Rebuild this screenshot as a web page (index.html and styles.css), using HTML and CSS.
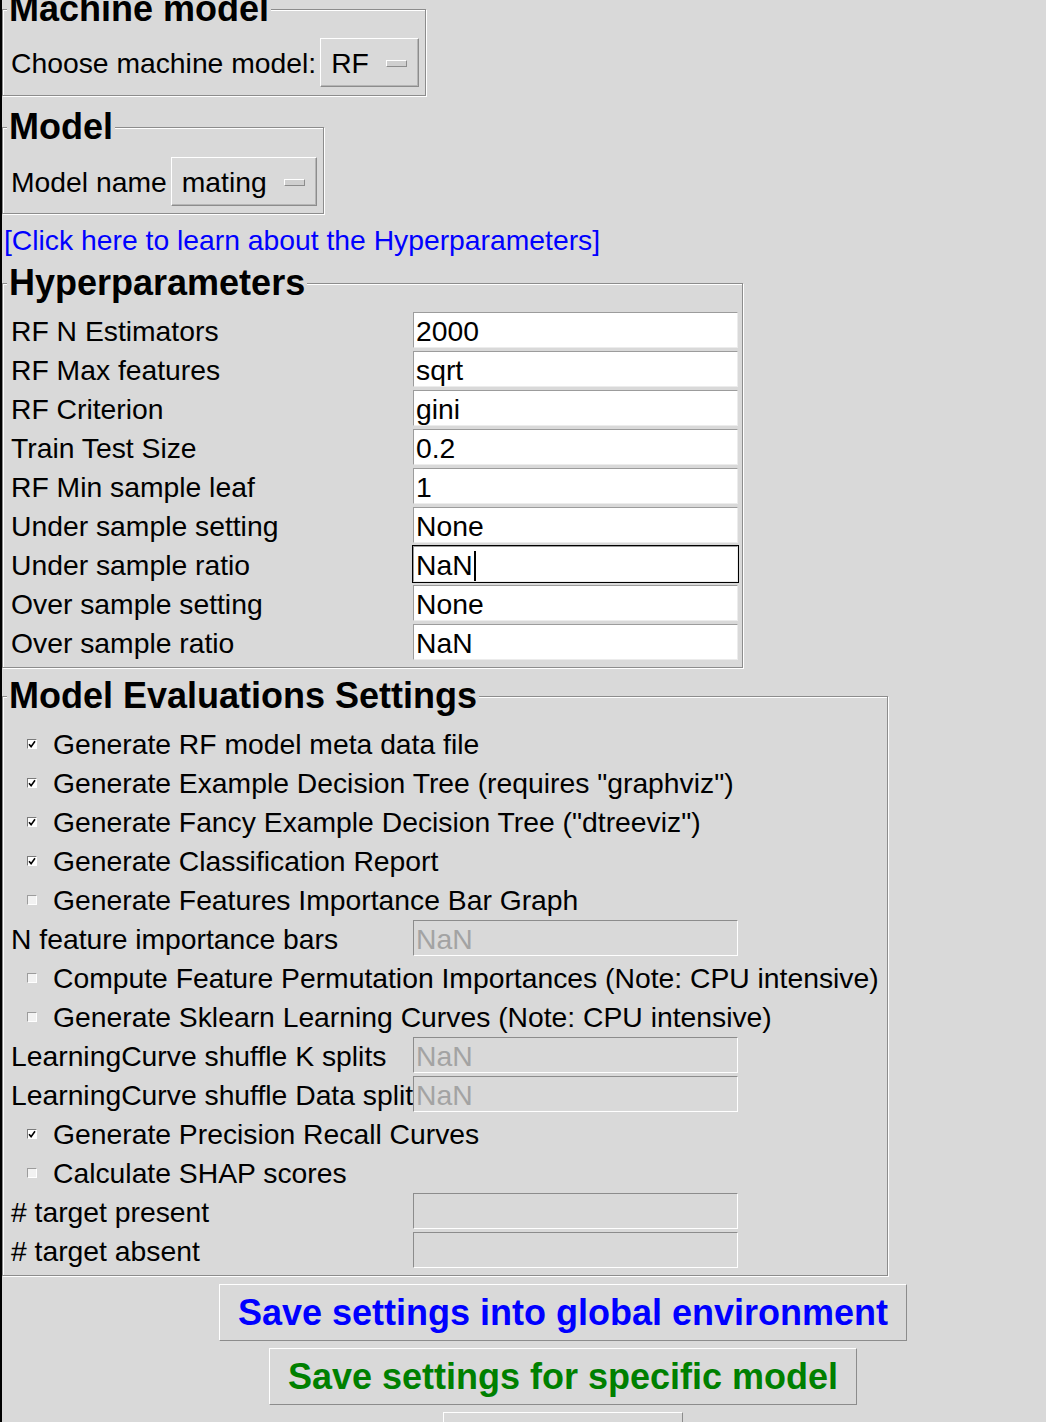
FILE: index.html
```html
<!DOCTYPE html>
<html lang="en">
<head>
<meta charset="utf-8">
<title>Machine model settings</title>
<link rel="stylesheet" href="styles.css">
</head>
<body>
  <fieldset class="group group-machine">
    <legend class="group-title">Machine model</legend>
    <div class="choice-row">
      <span class="choice-label">Choose machine model:</span>
      <div class="menubutton"><span class="menubutton-text">RF</span><span class="menubutton-indicator"></span></div>
    </div>
  </fieldset>

  <fieldset class="group group-model">
    <legend class="group-title">Model</legend>
    <div class="choice-row">
      <span class="choice-label">Model name</span>
      <div class="menubutton"><span class="menubutton-text">mating</span><span class="menubutton-indicator"></span></div>
    </div>
  </fieldset>

  <a class="help-link" href="#">[Click here to learn about the Hyperparameters]</a>

  <fieldset class="group group-hyper">
    <legend class="group-title">Hyperparameters</legend>
    <div class="field-grid">
      <span class="field-label">RF N Estimators</span><div class="entry">2000</div>
      <span class="field-label">RF Max features</span><div class="entry">sqrt</div>
      <span class="field-label">RF Criterion</span><div class="entry">gini</div>
      <span class="field-label">Train Test Size</span><div class="entry">0.2</div>
      <span class="field-label">RF Min sample leaf</span><div class="entry">1</div>
      <span class="field-label">Under sample setting</span><div class="entry">None</div>
      <span class="field-label">Under sample ratio</span><div class="entry entry-focused">NaN<span class="caret"></span></div>
      <span class="field-label">Over sample setting</span><div class="entry">None</div>
      <span class="field-label">Over sample ratio</span><div class="entry">NaN</div>
    </div>
  </fieldset>

  <fieldset class="group group-eval">
    <legend class="group-title">Model Evaluations Settings</legend>
    <div class="field-grid">
      <div class="check-row"><span class="checkbox checkbox-on"><svg viewBox="0 0 8 8" width="8" height="8"><path d="M1 4.2 L3.1 6.6 L7 1.2" fill="none" stroke="#000" stroke-width="1.6"/></svg></span><span>Generate RF model meta data file</span></div>
      <div class="check-row"><span class="checkbox checkbox-on"><svg viewBox="0 0 8 8" width="8" height="8"><path d="M1 4.2 L3.1 6.6 L7 1.2" fill="none" stroke="#000" stroke-width="1.6"/></svg></span><span>Generate Example Decision Tree (requires "graphviz")</span></div>
      <div class="check-row"><span class="checkbox checkbox-on"><svg viewBox="0 0 8 8" width="8" height="8"><path d="M1 4.2 L3.1 6.6 L7 1.2" fill="none" stroke="#000" stroke-width="1.6"/></svg></span><span>Generate Fancy Example Decision Tree ("dtreeviz")</span></div>
      <div class="check-row"><span class="checkbox checkbox-on"><svg viewBox="0 0 8 8" width="8" height="8"><path d="M1 4.2 L3.1 6.6 L7 1.2" fill="none" stroke="#000" stroke-width="1.6"/></svg></span><span>Generate Classification Report</span></div>
      <div class="check-row"><span class="checkbox"></span><span>Generate Features Importance Bar Graph</span></div>
      <span class="field-label">N feature importance bars</span><div class="entry entry-disabled">NaN</div>
      <div class="check-row"><span class="checkbox"></span><span>Compute Feature Permutation Importances (Note: CPU intensive)</span></div>
      <div class="check-row"><span class="checkbox"></span><span>Generate Sklearn Learning Curves (Note: CPU intensive)</span></div>
      <span class="field-label">LearningCurve shuffle K splits</span><div class="entry entry-disabled">NaN</div>
      <span class="field-label">LearningCurve shuffle Data split</span><div class="entry entry-disabled">NaN</div>
      <div class="check-row"><span class="checkbox checkbox-on"><svg viewBox="0 0 8 8" width="8" height="8"><path d="M1 4.2 L3.1 6.6 L7 1.2" fill="none" stroke="#000" stroke-width="1.6"/></svg></span><span>Generate Precision Recall Curves</span></div>
      <div class="check-row"><span class="checkbox"></span><span>Calculate SHAP scores</span></div>
      <span class="field-label"># target present</span><div class="entry entry-disabled"></div>
      <span class="field-label"># target absent</span><div class="entry entry-disabled"></div>
    </div>
  </fieldset>

  <div class="actions">
    <button class="action-button action-global" type="button">Save settings into global environment</button>
    <button class="action-button action-model" type="button">Save settings for specific model</button>
    <button class="action-button action-third" type="button" aria-label="more"></button>
  </div>
</body>
</html>
```

FILE: styles.css
```css
html {
  overflow: hidden;
  background: #d9d9d9;
}

body {
  margin: 0;
  min-height: 100vh;
  box-sizing: border-box;
  border-left: 2px solid #000;
  background: #d9d9d9;
  color: #000;
  font-family: "Liberation Sans", Arial, sans-serif;
  font-size: 28.3px;
  display: flex;
  flex-direction: column;
  align-items: flex-start;
}

.group {
  margin: 0;
  padding: 0 6px 0 8px;
  min-width: 0;
  border: 1px solid #8c8c8c;
  box-shadow: inset 1px 1px 0 #fff, 1px 1px 0 #fff;
}

.group-title {
  margin-left: -4px;
  padding: 0 2px;
  font-size: 36px;
  font-weight: bold;
  line-height: 40px;
  background: #d9d9d9;
}

.group-machine {
  margin-top: -11px;
  padding-top: 9px;
  padding-bottom: 8px;
}

.group-model {
  margin-top: 11px;
  padding-top: 10px;
  padding-bottom: 7px;
}

.group-hyper {
  padding-top: 8px;
  padding-bottom: 5px;
  padding-right: 4px;
}

.group-eval {
  margin-top: 8px;
  padding-top: 8px;
  padding-bottom: 5px;
  padding-right: 8px;
}

.choice-row {
  display: flex;
  align-items: center;
}

.choice-label {
  line-height: 32px;
}

.menubutton {
  display: flex;
  align-items: center;
  box-sizing: border-box;
  height: 49px;
  margin-left: 4px;
  padding: 0 11px 0 10px;
  border: 1px solid;
  border-color: #fff #8c8c8c #8c8c8c #fff;
  box-shadow: inset -1px -1px 0 #b5b5b5;
}

.menubutton-text {
  line-height: 32px;
}

.menubutton-indicator {
  box-sizing: border-box;
  width: 21px;
  height: 7px;
  margin-left: 17px;
  margin-top: 2px;
  border: 1px solid;
  border-color: #fff #8c8c8c #8c8c8c #fff;
  background: #cfcfcf;
}

.help-link {
  margin: 10px 0 7px 2px;
  line-height: 32px;
  color: #0000ff;
  text-decoration: none;
}

.field-grid {
  display: grid;
  grid-template-columns: 402px auto;
  grid-auto-rows: 39px;
  align-items: center;
}

.field-label {
  line-height: 32px;
  white-space: nowrap;
}

.entry {
  align-self: start;
  box-sizing: border-box;
  width: 325px;
  height: 36px;
  margin-top: 1px;
  padding: 2px 0 0 2px;
  line-height: 32px;
  background: #fff;
  border: 1px solid;
  border-color: #9c9c9c #ececec #ececec #9c9c9c;
  white-space: nowrap;
}

.entry-focused {
  outline: 1px solid #000;
}

.caret {
  display: inline-block;
  width: 2px;
  height: 30px;
  margin-left: 1px;
  vertical-align: -6px;
  background: #000;
}

.entry-disabled {
  background: #d9d9d9;
  color: #a3a3a3;
  border-color: #8c8c8c #fff #fff #8c8c8c;
}

.check-row {
  grid-column: 1 / -1;
  display: flex;
  align-items: center;
  padding-left: 16px;
  line-height: 32px;
  white-space: nowrap;
}

.checkbox {
  display: flex;
  align-items: center;
  justify-content: center;
  box-sizing: border-box;
  width: 10px;
  height: 10px;
  margin-right: 16px;
  background: #f2f2f2;
  border: 1px solid;
  border-color: #9c9c9c #fff #fff #9c9c9c;
}

.checkbox-on {
  background: #fff;
  border-color: #7a7a7a #fff #fff #7a7a7a;
}

.actions {
  align-self: stretch;
  box-sizing: border-box;
  margin-top: 8px;
  padding-left: 78px;
  display: flex;
  flex-direction: column;
  align-items: center;
  gap: 7px;
}

.action-button {
  box-sizing: border-box;
  height: 57px;
  margin: 0;
  padding: 0 18px;
  font-family: "Liberation Sans", Arial, sans-serif;
  font-size: 36px;
  font-weight: bold;
  background: #d9d9d9;
  border: 1px solid;
  border-color: #fff #8c8c8c #8c8c8c #fff;
  border-radius: 0;
}

.action-global {
  color: #0000ff;
}

.action-model {
  color: #008000;
}

.action-third {
  width: 240px;
}
```
